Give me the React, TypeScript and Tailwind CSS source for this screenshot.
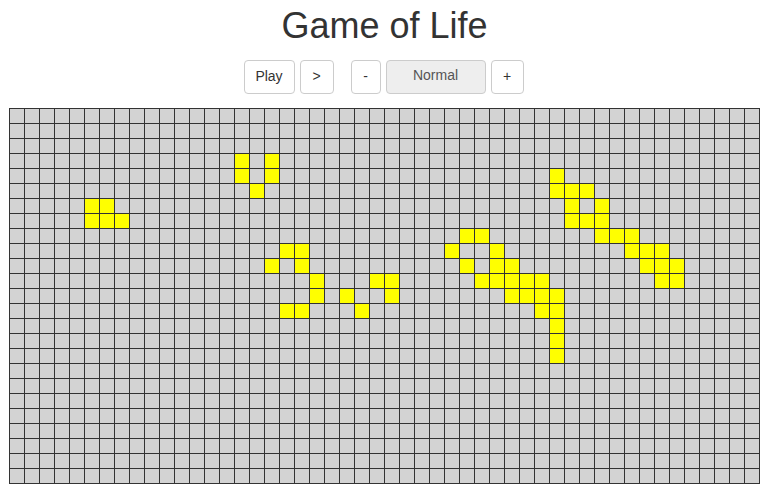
import React from "react";

const ROWS = 25;
const COLS = 50;

const alive: Record<number, number[]> = {
  3: [15, 17],
  4: [15, 17, 36],
  5: [16, 36, 37, 38],
  6: [5, 6, 37, 39],
  7: [5, 6, 7, 37, 38, 39],
  8: [30, 31, 39, 40, 41],
  9: [18, 19, 29, 32, 41, 42, 43],
  10: [17, 19, 30, 32, 33, 42, 43, 44],
  11: [20, 24, 25, 31, 32, 33, 34, 35, 43, 44],
  12: [20, 22, 25, 33, 34, 35, 36],
  13: [18, 19, 23, 35, 36],
  14: [36],
  15: [36],
  16: [36],
};

export default function App() {
  const cells: React.ReactNode[] = [];
  for (let r = 0; r < ROWS; r++) {
    for (let c = 0; c < COLS; c++) {
      const on = (alive[r] || []).includes(c);
      cells.push(
        <div
          key={`${r}-${c}`}
          className={on ? "w-[14px] h-[14px] bg-[#ffff00]" : "w-[14px] h-[14px] bg-[#d3d3d3]"}
        />
      );
    }
  }

  const base =
    "h-[34px] rounded-[4px] border border-[#cccccc] text-[14px] flex items-center justify-center";
  const btn = `${base} bg-white text-[#333333]`;

  return (
    <div className="font-['Liberation_Sans',Arial,sans-serif] text-[#333333] bg-white min-h-[494px]">
      <h1 className="pt-[6px] text-center text-[36px] leading-[1.1] font-normal text-[#333333]">
        Game of Life
      </h1>
      <div className="mt-[14px] flex justify-center">
        <div className="flex -translate-x-[1px]">
          <button className={`${btn} w-[51px]`}>Play</button>
          <button className={`${btn} w-[34px] ml-[5px]`}>&gt;</button>
          <button className={`${btn} w-[30px] ml-[17px]`}>-</button>
          <div className={`${base} w-[100px] ml-[5px] bg-[#eeeeee] text-[#555555] pb-[3px]`}>Normal</div>
          <button className={`${btn} w-[33px] ml-[5px]`}>+</button>
        </div>
      </div>
      <div className="mt-[14px] flex justify-center">
        <div className="grid grid-cols-[repeat(50,14px)] gap-px p-px bg-[#333333]">
          {cells}
        </div>
      </div>
    </div>
  );
}
